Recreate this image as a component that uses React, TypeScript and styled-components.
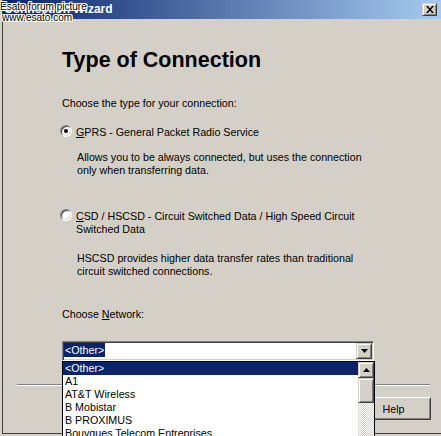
import React from "react";
import styled, { createGlobalStyle, css } from "styled-components";

const GlobalStyle = createGlobalStyle`
  html, body {
    margin: 0;
    padding: 0;
    width: 441px;
    height: 436px;
    overflow: hidden;
    background: #d4d0c8;
  }
  body {
    font-family: "Liberation Sans", Arial, sans-serif;
    font-size: 10.7px;
    color: #000;
  }
  * { box-sizing: border-box; }
`;

const raisedSmall = css`
  background: #d4d0c8;
  border: 1px solid;
  border-color: #d4d0c8 #404040 #404040 #d4d0c8;
  box-shadow: inset 1px 1px #ffffff, inset -1px -1px #808080;
`;

const Page = styled.div`
  position: relative;
  width: 441px;
  height: 436px;
  padding-left: 2px;
`;

const Watermark = styled.div`
  position: absolute;
  left: 0;
  top: 1px;
  z-index: 5;
  font-size: 10px;
  line-height: 11px;
  color: #000;
  white-space: nowrap;
  text-shadow: 1px 0 #fff, -1px 0 #fff, 0 1px #fff, 0 -1px #fff, 1px 1px #fff,
    -1px -1px #fff, 1px -1px #fff, -1px 1px #fff;
  & > div:last-child {
    padding-left: 2px;
  }
`;

const Window = styled.div`
  position: relative;
  width: 439px;
  height: 434px;
  display: flex;
  flex-direction: column;
  background: #d4d0c8;
  border-left: 1px solid #404040;
  border-bottom: 1px solid #404040;
`;

const TitleBar = styled.div`
  height: 19px;
  flex: none;
  display: flex;
  align-items: center;
  justify-content: space-between;
  padding: 0 4px 0 1px;
  background: linear-gradient(to right, #0a246a, #a6caf0);
`;

const TitleText = styled.span`
  color: #fff;
  font-weight: bold;
  font-size: 12px;
  line-height: 19px;
  white-space: nowrap;
`;

const CloseButton = styled.div`
  ${raisedSmall};
  width: 15px;
  height: 13px;
  display: flex;
  align-items: center;
  justify-content: center;
`;

const Content = styled.div`
  display: flex;
  flex-direction: column;
  align-items: flex-start;
  padding-left: 59px;
`;

const Heading = styled.h1`
  margin: 28px 0 0;
  font-size: 21.5px;
  line-height: 26px;
  font-weight: bold;
  white-space: nowrap;
`;

const Text = styled.div<{ $top: number; $indent?: number }>`
  margin-top: ${(p) => p.$top}px;
  margin-left: ${(p) => p.$indent ?? 0}px;
  line-height: 13px;
  white-space: nowrap;
`;

const OptionRow = styled.label<{ $top: number }>`
  display: flex;
  align-items: flex-start;
  margin-top: ${(p) => p.$top}px;
  margin-left: -2px;
`;

const Radio = styled.span<{ $checked?: boolean }>`
  position: relative;
  flex: none;
  width: 12px;
  height: 12px;
  margin-top: -1px;
  border-radius: 50%;
  border: 1px solid;
  border-color: #808080 #ffffff #ffffff #808080;
  background: #fff;
  box-shadow: inset 1px 1px #404040, inset -1px -1px #d4d0c8;
  ${(p) =>
    p.$checked &&
    css`
      &::after {
        content: "";
        position: absolute;
        left: 3px;
        top: 3px;
        width: 4px;
        height: 4px;
        border-radius: 50%;
        background: #000;
      }
    `}
`;

const OptionLabel = styled.span`
  margin-left: 4px;
  line-height: 13px;
  white-space: nowrap;
`;

const ComboWrap = styled.div`
  position: relative;
  margin-top: 20px;
  width: 312px;
  height: 20px;
  display: flex;
  align-items: flex-start;
  padding: 1px;
  background: #fff;
  border: 1px solid;
  border-color: #808080 #ffffff #ffffff #808080;
  box-shadow: inset 1px 1px #404040, inset -1px -1px #d4d0c8;
  z-index: 3;
`;

const Selected = styled.span`
  background: #0a246a;
  color: #fff;
  line-height: 14px;
  padding: 0 1px;
  white-space: nowrap;
`;

const ArrowButton = styled.div<{ $h?: number }>`
  ${raisedSmall};
  margin-left: auto;
  width: 16px;
  height: ${(p) => p.$h ?? 16}px;
  flex: none;
  display: flex;
  align-items: center;
  justify-content: center;
`;

const DropList = styled.div`
  position: absolute;
  left: -1px;
  top: calc(100% + 1px);
  width: 313px;
  height: 100px;
  display: flex;
  border: 1px solid #000;
  background: #fff;
`;

const Items = styled.div`
  flex: 1;
  display: flex;
  flex-direction: column;
`;

const Item = styled.div<{ $active?: boolean }>`
  line-height: 13px;
  padding-left: 2px;
  white-space: nowrap;
  ${(p) =>
    p.$active &&
    css`
      background: #0a246a;
      color: #fff;
    `}
`;

const ScrollBar = styled.div`
  width: 16px;
  flex: none;
  display: flex;
  flex-direction: column;
`;

const Thumb = styled.div`
  ${raisedSmall};
  height: 25px;
  flex: none;
`;

const Track = styled.div`
  flex: 1;
  background-color: #d4d0c8;
  background-image: conic-gradient(#ffffff 25%, #d4d0c8 0 50%, #ffffff 0 75%, #d4d0c8 0);
  background-size: 2px 2px;
`;

const Footer = styled.div`
  margin-top: auto;
  display: flex;
  flex-direction: column;
`;

const Separator = styled.div`
  height: 2px;
  margin: 0 11px 0 14px;
  border-top: 1px solid #808080;
  border-bottom: 1px solid #ffffff;
`;

const ButtonRow = styled.div`
  display: flex;
  justify-content: flex-end;
  padding: 11px 10px 13px 0;
`;

const PushButton = styled.div`
  width: 75px;
  height: 23px;
  display: flex;
  align-items: center;
  justify-content: center;
  background: #d4d0c8;
  border: 1px solid;
  border-color: #ffffff #404040 #404040 #ffffff;
  box-shadow: inset 1px 1px #d4d0c8, inset -1px -1px #808080;
`;

const Triangle = ({ up }: { up?: boolean }) => (
  <svg width="7" height="4" viewBox="0 0 7 4">
    <path d={up ? "M3.5 0L7 4H0z" : "M0 0h7L3.5 4z"} fill="#000" />
  </svg>
);

const networks = [
  "<Other>",
  "A1",
  "AT&T Wireless",
  "B Mobistar",
  "B PROXIMUS",
  "Bouygues Telecom Entreprises",
  "BT Cellnet",
];

export default function App() {
  return (
    <>
      <GlobalStyle />
      <Page>
        <Watermark>
          <div>Esato forum picture</div>
          <div>www.esato.com</div>
        </Watermark>
        <Window>
          <TitleBar>
            <TitleText>Connection Wizard</TitleText>
            <CloseButton>
              <svg width="8" height="7" viewBox="0 0 8 7">
                <path d="M0 0h2l2 2.4L6 0h2L5 3.5 8 7H6L4 4.6 2 7H0l3-3.5z" fill="#000" />
              </svg>
            </CloseButton>
          </TitleBar>
          <Content>
            <Heading>Type of Connection</Heading>
            <Text $top={24}>Choose the type for your connection:</Text>
            <OptionRow $top={16}>
              <Radio $checked />
              <OptionLabel>
                <u>G</u>PRS - General Packet Radio Service
              </OptionLabel>
            </OptionRow>
            <Text $top={12} $indent={15}>
              Allows you to be always connected, but uses the connection
              <br />
              only when transferring data.
            </Text>
            <OptionRow $top={33}>
              <Radio />
              <OptionLabel>
                <u>C</u>SD / HSCSD - Circuit Switched Data / High Speed Circuit
                <br />
                Switched Data
              </OptionLabel>
            </OptionRow>
            <Text $top={16} $indent={15}>
              HSCSD provides higher data transfer rates than traditional
              <br />
              circuit switched connections.
            </Text>
            <Text $top={30}>
              Choose <u>N</u>etwork:
            </Text>
            <ComboWrap>
              <Selected>&lt;Other&gt;</Selected>
              <ArrowButton>
                <Triangle />
              </ArrowButton>
              <DropList>
                <Items>
                  {networks.map((n, i) => (
                    <Item key={n} $active={i === 0}>
                      {n}
                    </Item>
                  ))}
                </Items>
                <ScrollBar>
                  <ArrowButton>
                    <Triangle up />
                  </ArrowButton>
                  <Thumb />
                  <Track />
                </ScrollBar>
              </DropList>
            </ComboWrap>
          </Content>
          <Footer>
            <Separator />
            <ButtonRow>
              <PushButton>Help</PushButton>
            </ButtonRow>
          </Footer>
        </Window>
      </Page>
    </>
  );
}
